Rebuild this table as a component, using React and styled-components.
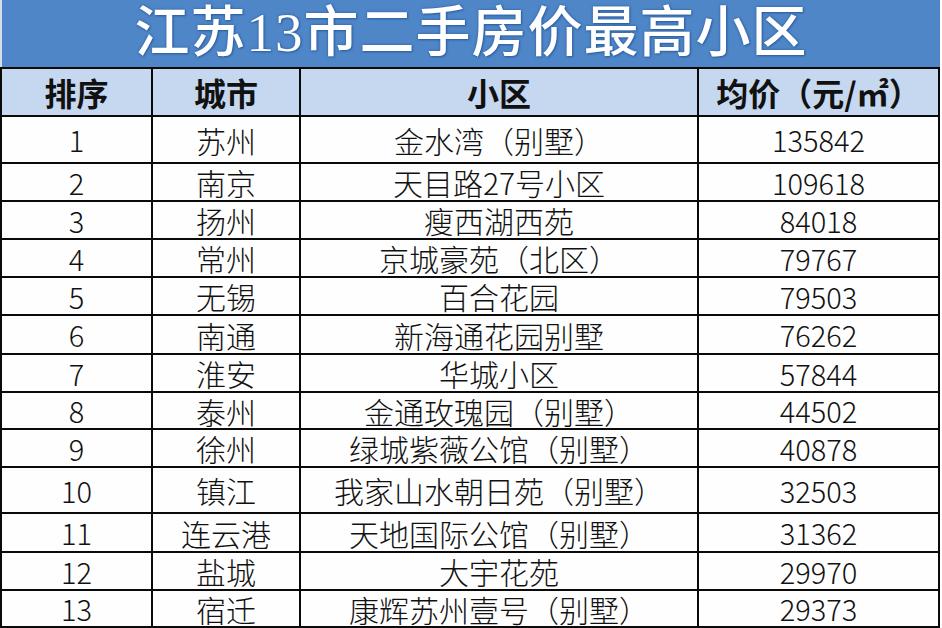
import React from 'react';
import styled, { createGlobalStyle } from 'styled-components';

const GlobalStyle = createGlobalStyle`
  html, body {
    margin: 0;
    padding: 0;
    background: #ffffff;
  }
  body {
    font-family: "Noto Sans CJK SC", "Noto Sans", sans-serif;
  }
`;

const Sheet = styled.div`
  width: 942px;
  height: 628px;
  background: #ffffff;
`;

const TitleBar = styled.div`
  width: 940px;
  height: 67px;
  box-sizing: border-box;
  background: #4f86c8;
  border-left: 2px solid #d3deec;
  display: flex;
  align-items: center;
  justify-content: center;
  color: #ffffff;
  font-family: "Liberation Serif", "Noto Sans CJK SC", serif;
  font-size: 55px;
  font-weight: 500;
  letter-spacing: 1px;
  text-shadow: 0 0 3px #2b5e9e, 1px 1px 2px #2f62a3;
  line-height: 1;
  padding-bottom: 2px;
`;

const Grid = styled.div`
  width: 940px;
  box-sizing: border-box;
  background: #0a0a0a;
  padding: 2px;
  display: flex;
  flex-direction: column;
  gap: 2px;
`;

const Row = styled.div`
  display: grid;
  grid-template-columns: 149px 146px 396px 239px;
  gap: 2px;
  height: ${p => p.$h}px;
`;

const Cell = styled.div`
  background: ${p => (p.$head ? '#c6d8ef' : '#fefefe')};
  display: flex;
  align-items: center;
  justify-content: center;
  color: #111111;
  font-family: "Noto Sans CJK SC", sans-serif;
  font-size: ${p => (p.$head ? 32 : p.$num ? 29 : 30)}px;
  font-weight: ${p => (p.$head ? 700 : 300)};
  line-height: 1;
  white-space: nowrap;
`;

const rows = [
  ['1', '苏州', '金水湾（别墅）', '135842', 45],
  ['2', '南京', '天目路27号小区', '109618', 36],
  ['3', '扬州', '瘦西湖西苑', '84018', 36],
  ['4', '常州', '京城豪苑（北区）', '79767', 36],
  ['5', '无锡', '百合花园', '79503', 36],
  ['6', '南通', '新海通花园别墅', '76262', 37],
  ['7', '淮安', '华城小区', '57844', 36],
  ['8', '泰州', '金通玫瑰园（别墅）', '44502', 35],
  ['9', '徐州', '绿城紫薇公馆（别墅）', '40878', 36],
  ['10', '镇江', '我家山水朝日苑（别墅）', '32503', 44],
  ['11', '连云港', '天地国际公馆（别墅）', '31362', 37],
  ['12', '盐城', '大宇花苑', '29970', 36],
  ['13', '宿迁', '康辉苏州壹号（别墅）', '29373', 35],
];

const App = () => (
  <Sheet>
    <GlobalStyle />
    <TitleBar>江苏13市二手房价最高小区</TitleBar>
    <Grid>
      <Row $h={46}>
        <Cell $head>排序</Cell>
        <Cell $head>城市</Cell>
        <Cell $head>小区</Cell>
        <Cell $head>均价（元/㎡）</Cell>
      </Row>
      {rows.map(([rank, city, name, price, h]) => (
        <Row key={rank} $h={h}>
          <Cell $num>{rank}</Cell>
          <Cell>{city}</Cell>
          <Cell>{name}</Cell>
          <Cell $num>{price}</Cell>
        </Row>
      ))}
    </Grid>
  </Sheet>
);

export default App;
